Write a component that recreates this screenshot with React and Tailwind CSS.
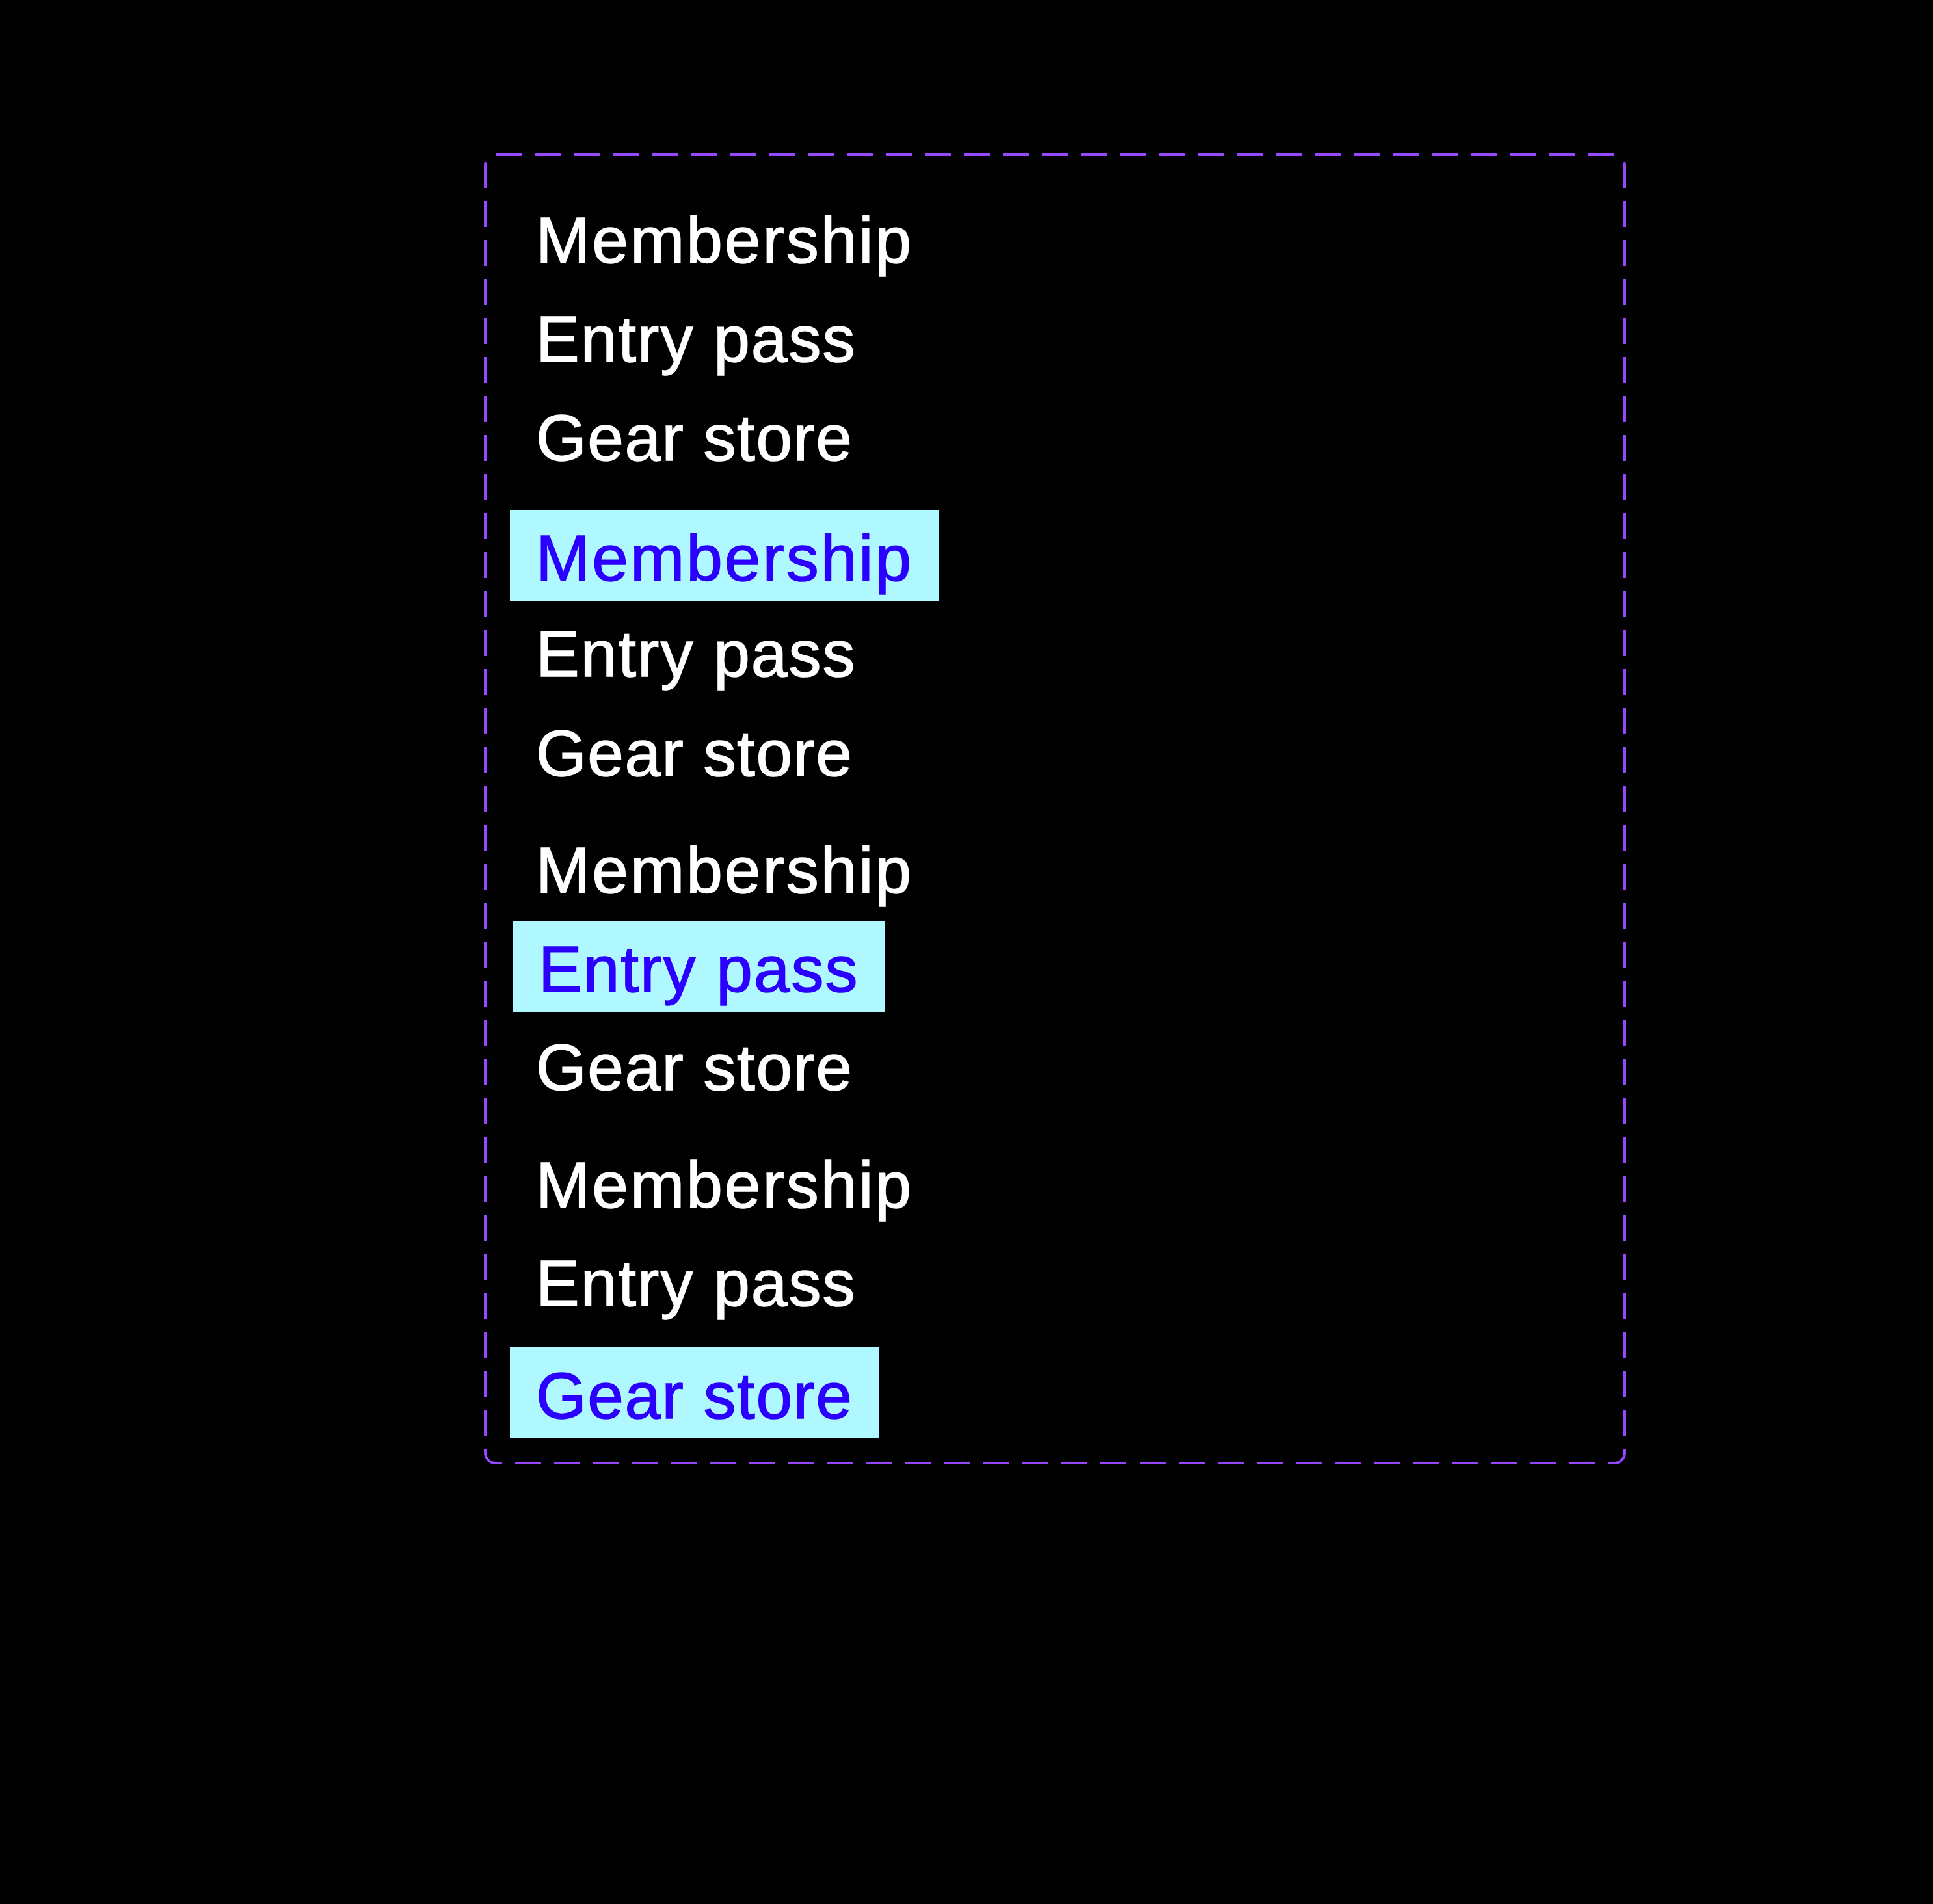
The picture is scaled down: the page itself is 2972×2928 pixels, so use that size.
const groups = [
  {
    className: "mt-[59px]",
    items: [
      { label: "Membership", gap: "" },
      { label: "Entry pass", gap: "mt-[12px]" },
      { label: "Gear store", gap: "mt-[12px]" },
    ],
  },
  {
    className: "mt-[45px]",
    items: [
      { label: "Membership", gap: "", active: true },
      { label: "Entry pass", gap: "mt-[7px]" },
      { label: "Gear store", gap: "mt-[13px]" },
    ],
  },
  {
    className: "mt-[40px]",
    items: [
      { label: "Membership", gap: "" },
      { label: "Entry pass", gap: "mt-[12px] ml-[4px]", active: true },
      { label: "Gear store", gap: "mt-[11px]" },
    ],
  },
  {
    className: "mt-[41px]",
    items: [
      { label: "Membership", gap: "" },
      { label: "Entry pass", gap: "mt-[11px]" },
      { label: "Gear store", gap: "mt-[33px]", active: true },
    ],
  },
];

// tracking differs a touch per label to match the original text widths
const tracking = {
  Membership: "tracking-[3px]",
  "Entry pass": "tracking-[2px]",
  "Gear store": "tracking-[1.5px]",
};

function MenuItem({ label, active, gap }) {
  return (
    <div
      className={`${gap} ${tracking[label]} self-start h-[140px] px-[40px] pt-[8px] text-[100px] leading-[132px] whitespace-nowrap [-webkit-text-stroke:1.5px_currentColor] ${
        active ? "bg-[#b0f8ff] text-[#2b00ff]" : "text-white"
      }`}
    >
      {label}
    </div>
  );
}

export default function App() {
  return (
    <div className="min-h-screen bg-black pt-[236px] pl-[744px] font-['Liberation_Sans',Arial,sans-serif]">
      <div className="relative w-[1756px] h-[2016px] px-[40px] flex flex-col">
        {/* dashed component-set frame */}
        <svg
          className="absolute inset-0 pointer-events-none"
          width="1756"
          height="2016"
          viewBox="0 0 1756 2016"
          fill="none"
        >
          <rect
            x="2"
            y="2"
            width="1752"
            height="2012"
            rx="16"
            stroke="#9747ff"
            strokeWidth="4"
            strokeDasharray="40 20"
          />
        </svg>

        {groups.map((group, i) => (
          <div key={i} className={`${group.className} flex flex-col`}>
            {group.items.map((item) => (
              <MenuItem key={item.label} {...item} />
            ))}
          </div>
        ))}
      </div>
    </div>
  );
}
